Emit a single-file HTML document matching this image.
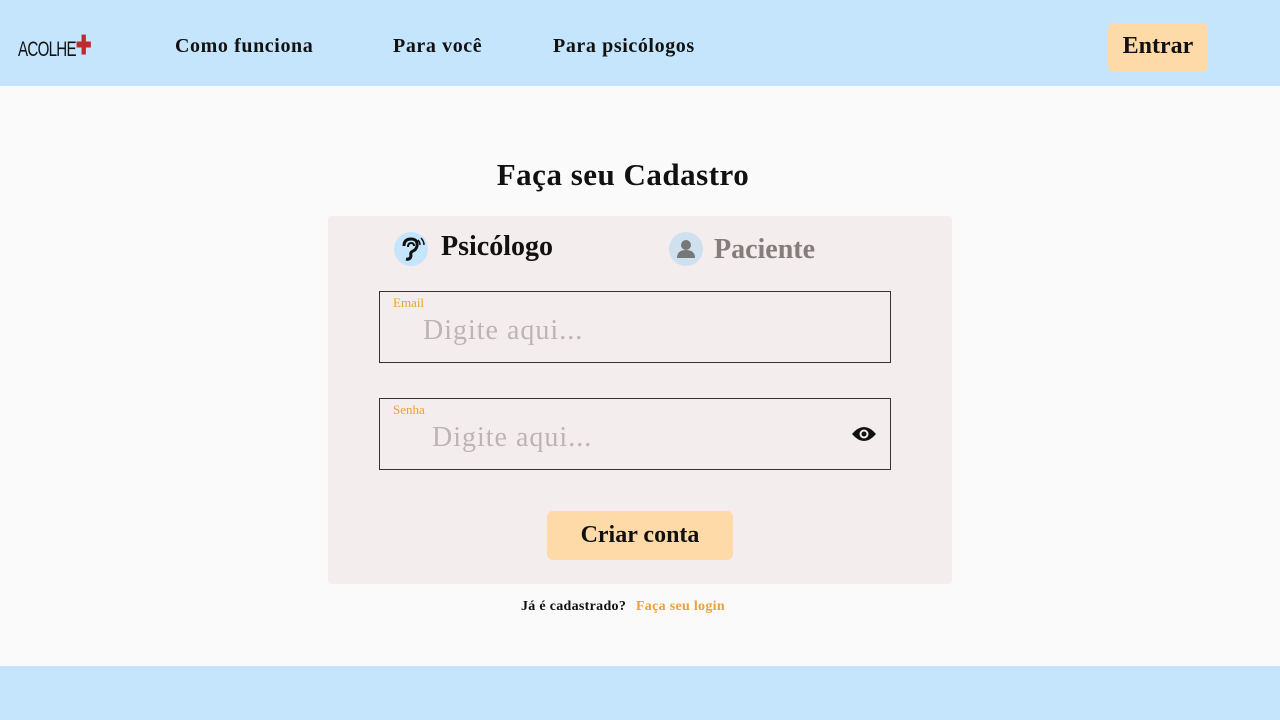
<!DOCTYPE html>
<html><head><meta charset="utf-8"><style>
*{margin:0;padding:0;box-sizing:border-box}
body{width:1280px;height:720px;background:#fafafa;font-family:"Liberation Serif",serif;position:relative;overflow:hidden}
.hdr{position:absolute;left:0;top:0;width:1280px;height:86px;background:#c5e5fc}
.logo{position:absolute;left:18px;top:32px;font-family:"Liberation Sans",sans-serif;font-size:21px;letter-spacing:-1px;transform:scaleX(.72);transform-origin:left;color:#111}
.nav{position:absolute;top:35px;font-size:20px;font-weight:bold;color:#111;letter-spacing:.6px}
.btn{position:absolute;background:#fedaa9;border-radius:6px;font-weight:bold;color:#111;text-align:center}
.foot{position:absolute;left:0;top:666px;width:1280px;height:54px;background:#c5e5fc}
h1{position:absolute;left:0;width:1246px;top:157px;text-align:center;font-size:31px;color:#111;letter-spacing:.5px}
.card{position:absolute;left:328px;top:216px;width:624px;height:368px;background:#f3eded;border-radius:4px}
.ic{position:absolute;width:34px;height:34px;border-radius:50%;background:#c5e5fc}
.field{position:absolute;left:379px;width:512px;height:72px;border:1px solid #333}
.lab{position:absolute;left:13px;top:3px;font-size:13px;color:#f0a030}
.ph{position:absolute;top:23px;font-size:28px;color:#bdb5b5;letter-spacing:1px}
</style></head><body>
<div class="hdr">
<div class="logo">ACOLHE<span style="color:#c0282c;font-weight:bold;font-size:26px;position:relative;top:-2px">✚</span></div>
<div class="nav" style="left:175px">Como funciona</div>
<div class="nav" style="left:393px">Para você</div>
<div class="nav" style="left:553px">Para psicólogos</div>
<div class="btn" style="left:1108px;top:23px;width:100px;height:49px;font-size:24px;line-height:46px">Entrar</div>
</div>
<h1>Faça seu Cadastro</h1>
<div class="card"></div>
<div class="ic" style="left:394px;top:232px"><svg width="34" height="34" viewBox="0 0 34 34"><path d="M10 14q0-7 7-7t6 7q-1 4-4 5t-2 5q-1 4-5 3" fill="none" stroke="#111" stroke-width="3"/><path d="M14 15q0-4 3-4t3 3" fill="none" stroke="#111" stroke-width="2"/><path d="M24 8q2 2 2 5M27 6q3 3 3 7" fill="none" stroke="#111" stroke-width="1.5"/></svg></div>
<div style="position:absolute;left:441px;top:231px;font-size:28px;font-weight:bold;color:#111">Psicólogo</div>
<div class="ic" style="left:669px;top:232px;background:#cfe0ee"><svg width="34" height="34" viewBox="0 0 34 34"><circle cx="17" cy="13" r="5" fill="#777"/><path d="M8 26q0-8 9-8t9 8z" fill="#777"/></svg></div>
<div style="position:absolute;left:714px;top:234px;font-size:28px;font-weight:bold;color:#857c7c">Paciente</div>
<div class="field" style="top:291px"><div class="lab">Email</div><div class="ph" style="left:43px">Digite aqui...</div></div>
<div class="field" style="top:398px"><div class="lab">Senha</div><div class="ph" style="left:52px">Digite aqui...</div>
<svg style="position:absolute;left:471px;top:26px" width="26" height="18" viewBox="0 0 26 18"><path d="M1 9Q13-5 25 9Q13 23 1 9z" fill="#111"/><circle cx="13" cy="9" r="4.5" fill="#f3eded"/><circle cx="13" cy="9" r="2.5" fill="#111"/></svg></div>
<div class="btn" style="left:547px;top:511px;width:186px;height:49px;font-size:24px;line-height:48px">Criar conta</div>
<div style="position:absolute;left:521px;top:599px;font-size:14px;font-weight:bold;color:#111;letter-spacing:.3px">Já é cadastrado? <span style="color:#f0a030;margin-left:6px">Faça seu login</span></div>
<div class="foot"></div>
</body></html>
